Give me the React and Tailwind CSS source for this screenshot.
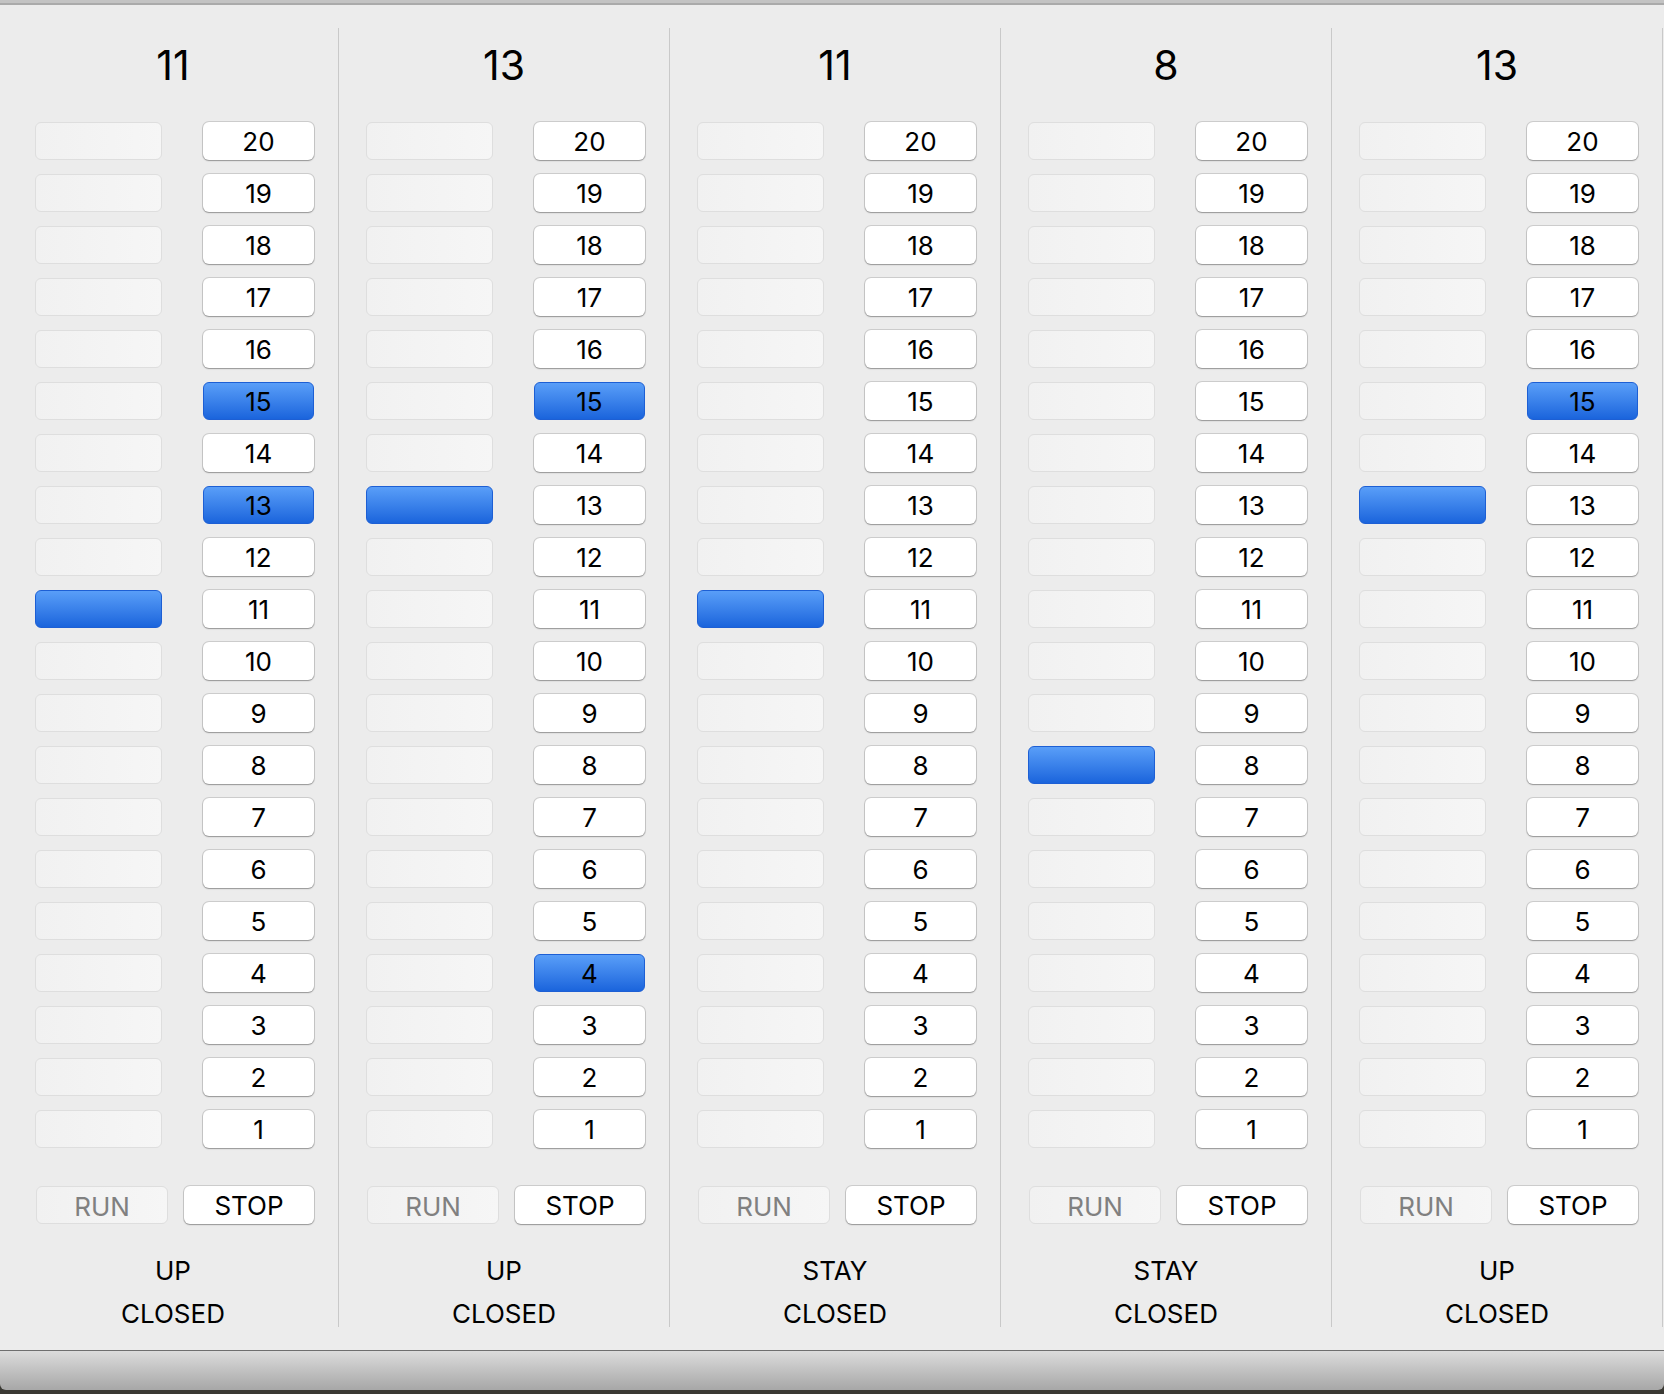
import React from 'react'

const FONT = { fontFamily: 'Inter, "Noto Sans", "Liberation Sans", sans-serif' }

const elevators = [
  { floor: 11, selected: [15, 13], direction: 'UP', door: 'CLOSED' },
  { floor: 13, selected: [15, 4], direction: 'UP', door: 'CLOSED' },
  { floor: 11, selected: [], direction: 'STAY', door: 'CLOSED' },
  { floor: 8, selected: [], direction: 'STAY', door: 'CLOSED' },
  { floor: 13, selected: [15], direction: 'UP', door: 'CLOSED' },
]

const floors = Array.from({ length: 20 }, (_, i) => 20 - i)

const blue = 'bg-gradient-to-b from-[#599ef8] to-[#1a64dc] border border-[#1d5fd4]'
const white = 'bg-white shadow-[0_0_0_1px_rgba(0,0,0,0.13),0_1px_1.5px_rgba(0,0,0,0.28)]'
const empty = 'bg-gradient-to-r from-[#f1f1f1] to-[#f6f6f6] border border-[#dedede]'

function Shaft({ here }) {
  return <div className={`w-[127px] h-[38px] rounded-[6px] ${here ? blue : empty}`} />
}

function FloorButton({ n, on }) {
  return (
    <button
      className={`w-[111px] h-[38px] rounded-[6px] flex items-center justify-center text-[26px] text-black ${
        on ? blue : white
      }`}
    >
      {n}
    </button>
  )
}

function Column({ elevator }) {
  return (
    <div className="w-[331px] h-[1299px] flex flex-col border-r border-[#c9c9c9] [&>*]:shrink-0">
      <div className="pt-[12px] h-[94px] text-center text-[41px] leading-[50px] text-black">{elevator.floor}</div>
      <div className="flex flex-col gap-[14px] pl-[27px] pr-[24px]">
        {floors.map(f => (
          <div key={f} className="flex justify-between">
            <Shaft here={f === elevator.floor} />
            <FloorButton n={f} on={elevator.selected.includes(f)} />
          </div>
        ))}
      </div>
      <div className="flex gap-[16px] pl-[28px] pr-[24px] mt-[38px]">
        <button className={`w-[132px] h-[38px] rounded-[6px] ${empty} text-[26px] text-[#808080]`}>RUN</button>
        <button className={`w-[130px] h-[38px] rounded-[6px] ${white} text-[26px] text-black`}>STOP</button>
      </div>
      <div className="mt-[32px] text-center text-[26px] leading-[30px] text-black">{elevator.direction}</div>
      <div className="mt-[13px] text-center text-[26px] leading-[30px] text-black">{elevator.door}</div>
    </div>
  )
}

export default function App() {
  return (
    <div className="w-[1664px] h-[1394px] bg-[#3a3933] flex flex-col" style={FONT}>
      <div className="h-[3px] bg-[#c3c3c3]" />
      <div className="h-[2px] bg-[#aaaaaa]" />
      <div className="flex-1 bg-[#ececec] pt-[23px] pl-[8px]">
        <div className="flex">
          {elevators.map((e, i) => (
            <Column key={i} elevator={e} />
          ))}
        </div>
      </div>
      <div className="h-[1px] bg-[#6f6f6f]" />
      <div className="h-[39px] bg-gradient-to-b from-[#dcdcdc] to-[#a7a7a7] rounded-bl-[6px] rounded-br-[6px]" />
      <div className="h-[4px]" />
    </div>
  )
}
